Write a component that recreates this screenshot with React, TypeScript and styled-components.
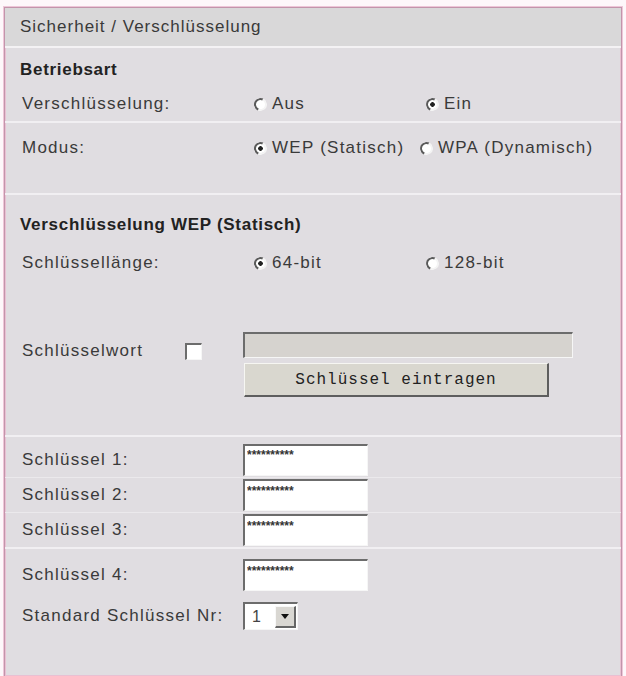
import React from "react";
import styled, { createGlobalStyle, css } from "styled-components";

const GlobalStyle = createGlobalStyle`
  html, body { margin: 0; padding: 0; background: #fdf7fa; }
  body { font-family: "Liberation Sans", Arial, sans-serif; color: #333; }
  * { box-sizing: border-box; }
`;

const Page = styled.div`
  padding: 7px 4px 0 4px;
  height: 676px;
  overflow: hidden;
`;

const Panel = styled.div`
  border: 1px solid #c295ab;
  border-bottom: none;
  box-shadow: 0 0 0 1px #eec6d8, inset 0 0 0 1px #e9bfd2;
  background: #e0dde1;
  min-height: 669px;
  display: flex;
  flex-direction: column;
`;

const textStyle = css`
  font-size: 17px;
  letter-spacing: 1.25px;
  color: #3a3a3a;
`;

const Header = styled.div`
  height: 40px;
  padding-left: 15px;
  display: flex;
  align-items: center;
  background: #d9d8d9;
  border-bottom: 2px solid #f4f2f4;
  font-size: 17px;
  letter-spacing: 1px;
  color: #3a3a3a;
`;

const Divider = styled.div<{ $faint?: boolean }>`
  height: ${(p) => (p.$faint ? 1 : 2)}px;
  background: ${(p) => (p.$faint ? "#ebe9ec" : "#f1eff2")};
`;

const Section = styled.div<{ $pt?: number; $pb?: number }>`
  padding-top: ${(p) => p.$pt ?? 0}px;
  padding-bottom: ${(p) => p.$pb ?? 0}px;
`;

const SectionTitle = styled.div<{ $h: number }>`
  height: ${(p) => p.$h}px;
  padding-left: 15px;
  display: flex;
  align-items: center;
  font-weight: bold;
  font-size: 17px;
  letter-spacing: 0.7px;
  color: #222;
`;

const Row = styled.div<{ $h: number; $col?: number }>`
  height: ${(p) => p.$h}px;
  padding-left: 17px;
  display: grid;
  grid-template-columns: 232px ${(p) => p.$col ?? 172}px 1fr;
  align-items: center;
`;

const Label = styled.span`
  ${textStyle};
`;

const Option = styled.label`
  display: flex;
  align-items: center;
  gap: 5px;
  ${textStyle};
`;

const Radio = styled.input.attrs({ type: "radio" })`
  appearance: none;
  margin: 0;
  width: 13px;
  height: 13px;
  flex: none;
  border-radius: 50%;
  border: 2px solid;
  border-color: #5a5a5a #f4f4f4 #f4f4f4 #5a5a5a;
  transform: rotate(-20deg);
  background: #fff;
  &:checked {
    background: radial-gradient(circle, #222 0 2px, #fff 2.6px);
  }
`;

const sunken = css`
  border-top: 2px solid #6c6c6c;
  border-left: 2px solid #6c6c6c;
  border-right: 1px solid #f6f6f6;
  border-bottom: 1px solid #f6f6f6;
`;

const KeywordBlock = styled.div`
  padding: 47px 0 38px 17px;
  display: grid;
  grid-template-columns: 221px 330px;
`;

const KeywordLabel = styled.div`
  display: flex;
  align-items: center;
  margin-top: 9px;
  height: 20px;
`;

const KeywordLabelText = styled(Label)`
  width: 163px;
`;

const Checkbox = styled.input.attrs({ type: "checkbox" })`
  appearance: none;
  margin: 0;
  width: 17px;
  height: 17px;
  background: #fff;
  ${sunken};
`;

const KeywordControls = styled.div`
  display: flex;
  flex-direction: column;
  gap: 5px;
`;

const KeywordInput = styled.input`
  width: 330px;
  height: 26px;
  margin: 0;
  background: #d6d3cf;
  ${sunken};
`;

const Button = styled.button`
  width: 305px;
  height: 34px;
  margin: 0 0 0 1px;
  padding: 0;
  background: #d9d7cf;
  border-top: 1px solid #f6f6f2;
  border-left: 1px solid #f6f6f2;
  border-right: 2px solid #5e5e5e;
  border-bottom: 2px solid #5e5e5e;
  font-family: "Liberation Mono", "Courier New", monospace;
  font-size: 16px;
  letter-spacing: 1px;
  color: #222;
`;

const KeyGroup = styled.div<{ $pt: number }>`
  padding-top: ${(p) => p.$pt}px;
  display: flex;
  flex-direction: column;
`;

const KeyRow = styled.div<{ $h: number }>`
  height: ${(p) => p.$h}px;
  padding-left: 17px;
  display: grid;
  grid-template-columns: 221px 1fr;
  align-items: center;
`;

const KeyInput = styled.input`
  width: 125px;
  height: 32px;
  margin: 0;
  padding: 4px 2px 14px 2px;
  background: #fff;
  font-family: "Liberation Sans", Arial, sans-serif;
  font-weight: bold;
  font-size: 12px;
  line-height: 12px;
  color: #333;
  ${sunken};
`;

const SelectBox = styled.div`
  width: 55px;
  height: 28px;
  display: flex;
  align-items: stretch;
  background: #fff;
  ${sunken};
`;

const SelectValue = styled.span`
  flex: 1;
  display: flex;
  align-items: center;
  padding-left: 7px;
  font-size: 16px;
  color: #444;
`;

const SelectArrow = styled.span`
  width: 21px;
  margin: 2px 1px 1px 0;
  display: flex;
  align-items: center;
  justify-content: center;
  background: #d9d7d2;
  border-top: 1px solid #f8f8f8;
  border-left: 1px solid #f8f8f8;
  border-right: 2px solid #666;
  border-bottom: 2px solid #666;
`;

const Filler = styled.div`
  flex: 1;
`;

const keys = [1, 2, 3];

export default function App() {
  return (
    <>
      <GlobalStyle />
      <Page>
        <Panel>
          <Header>Sicherheit / Verschlüsselung</Header>

          <Section $pt={5}>
            <SectionTitle $h={34}>Betriebsart</SectionTitle>
            <Row $h={34}>
              <Label>Verschlüsselung:</Label>
              <Option>
                <Radio name="enc" /> Aus
              </Option>
              <Option>
                <Radio name="enc" defaultChecked /> Ein
              </Option>
            </Row>
            <Divider />
            <Row $h={50} $col={166}>
              <Label>Modus:</Label>
              <Option>
                <Radio name="mode" defaultChecked /> WEP (Statisch)
              </Option>
              <Option>
                <Radio name="mode" /> WPA (Dynamisch)
              </Option>
            </Row>
          </Section>
          <Section $pt={20} />
          <Divider />

          <Section $pt={14}>
            <SectionTitle $h={32}>Verschlüsselung WEP (Statisch)</SectionTitle>
            <Row $h={44}>
              <Label>Schlüssellänge:</Label>
              <Option>
                <Radio name="len" defaultChecked /> 64-bit
              </Option>
              <Option>
                <Radio name="len" /> 128-bit
              </Option>
            </Row>
          </Section>

          <KeywordBlock>
            <KeywordLabel>
              <KeywordLabelText>Schlüsselwort</KeywordLabelText>
              <Checkbox />
            </KeywordLabel>
            <KeywordControls>
              <KeywordInput disabled />
              <Button type="button">Schlüssel eintragen</Button>
            </KeywordControls>
          </KeywordBlock>
          <Divider />

          <KeyGroup $pt={5}>
            {keys.map((k, i) => (
              <React.Fragment key={k}>
                {i > 0 && <Divider $faint />}
                <KeyRow $h={i === 0 ? 35 : 34}>
                  <Label>Schlüssel {k}:</Label>
                  <KeyInput readOnly value="**********" />
                </KeyRow>
              </React.Fragment>
            ))}
          </KeyGroup>
          <Divider />
          <KeyGroup $pt={6}>
            <KeyRow $h={40}>
              <Label>Schlüssel 4:</Label>
              <KeyInput readOnly value="**********" />
            </KeyRow>
            <KeyRow $h={42}>
              <Label>Standard Schlüssel Nr:</Label>
              <SelectBox>
                <SelectValue>1</SelectValue>
                <SelectArrow>
                  <svg width="8" height="5" viewBox="0 0 8 5">
                    <path d="M0 0h8L4 5z" fill="#111" />
                  </svg>
                </SelectArrow>
              </SelectBox>
            </KeyRow>
          </KeyGroup>
          <Filler />
        </Panel>
      </Page>
    </>
  );
}
